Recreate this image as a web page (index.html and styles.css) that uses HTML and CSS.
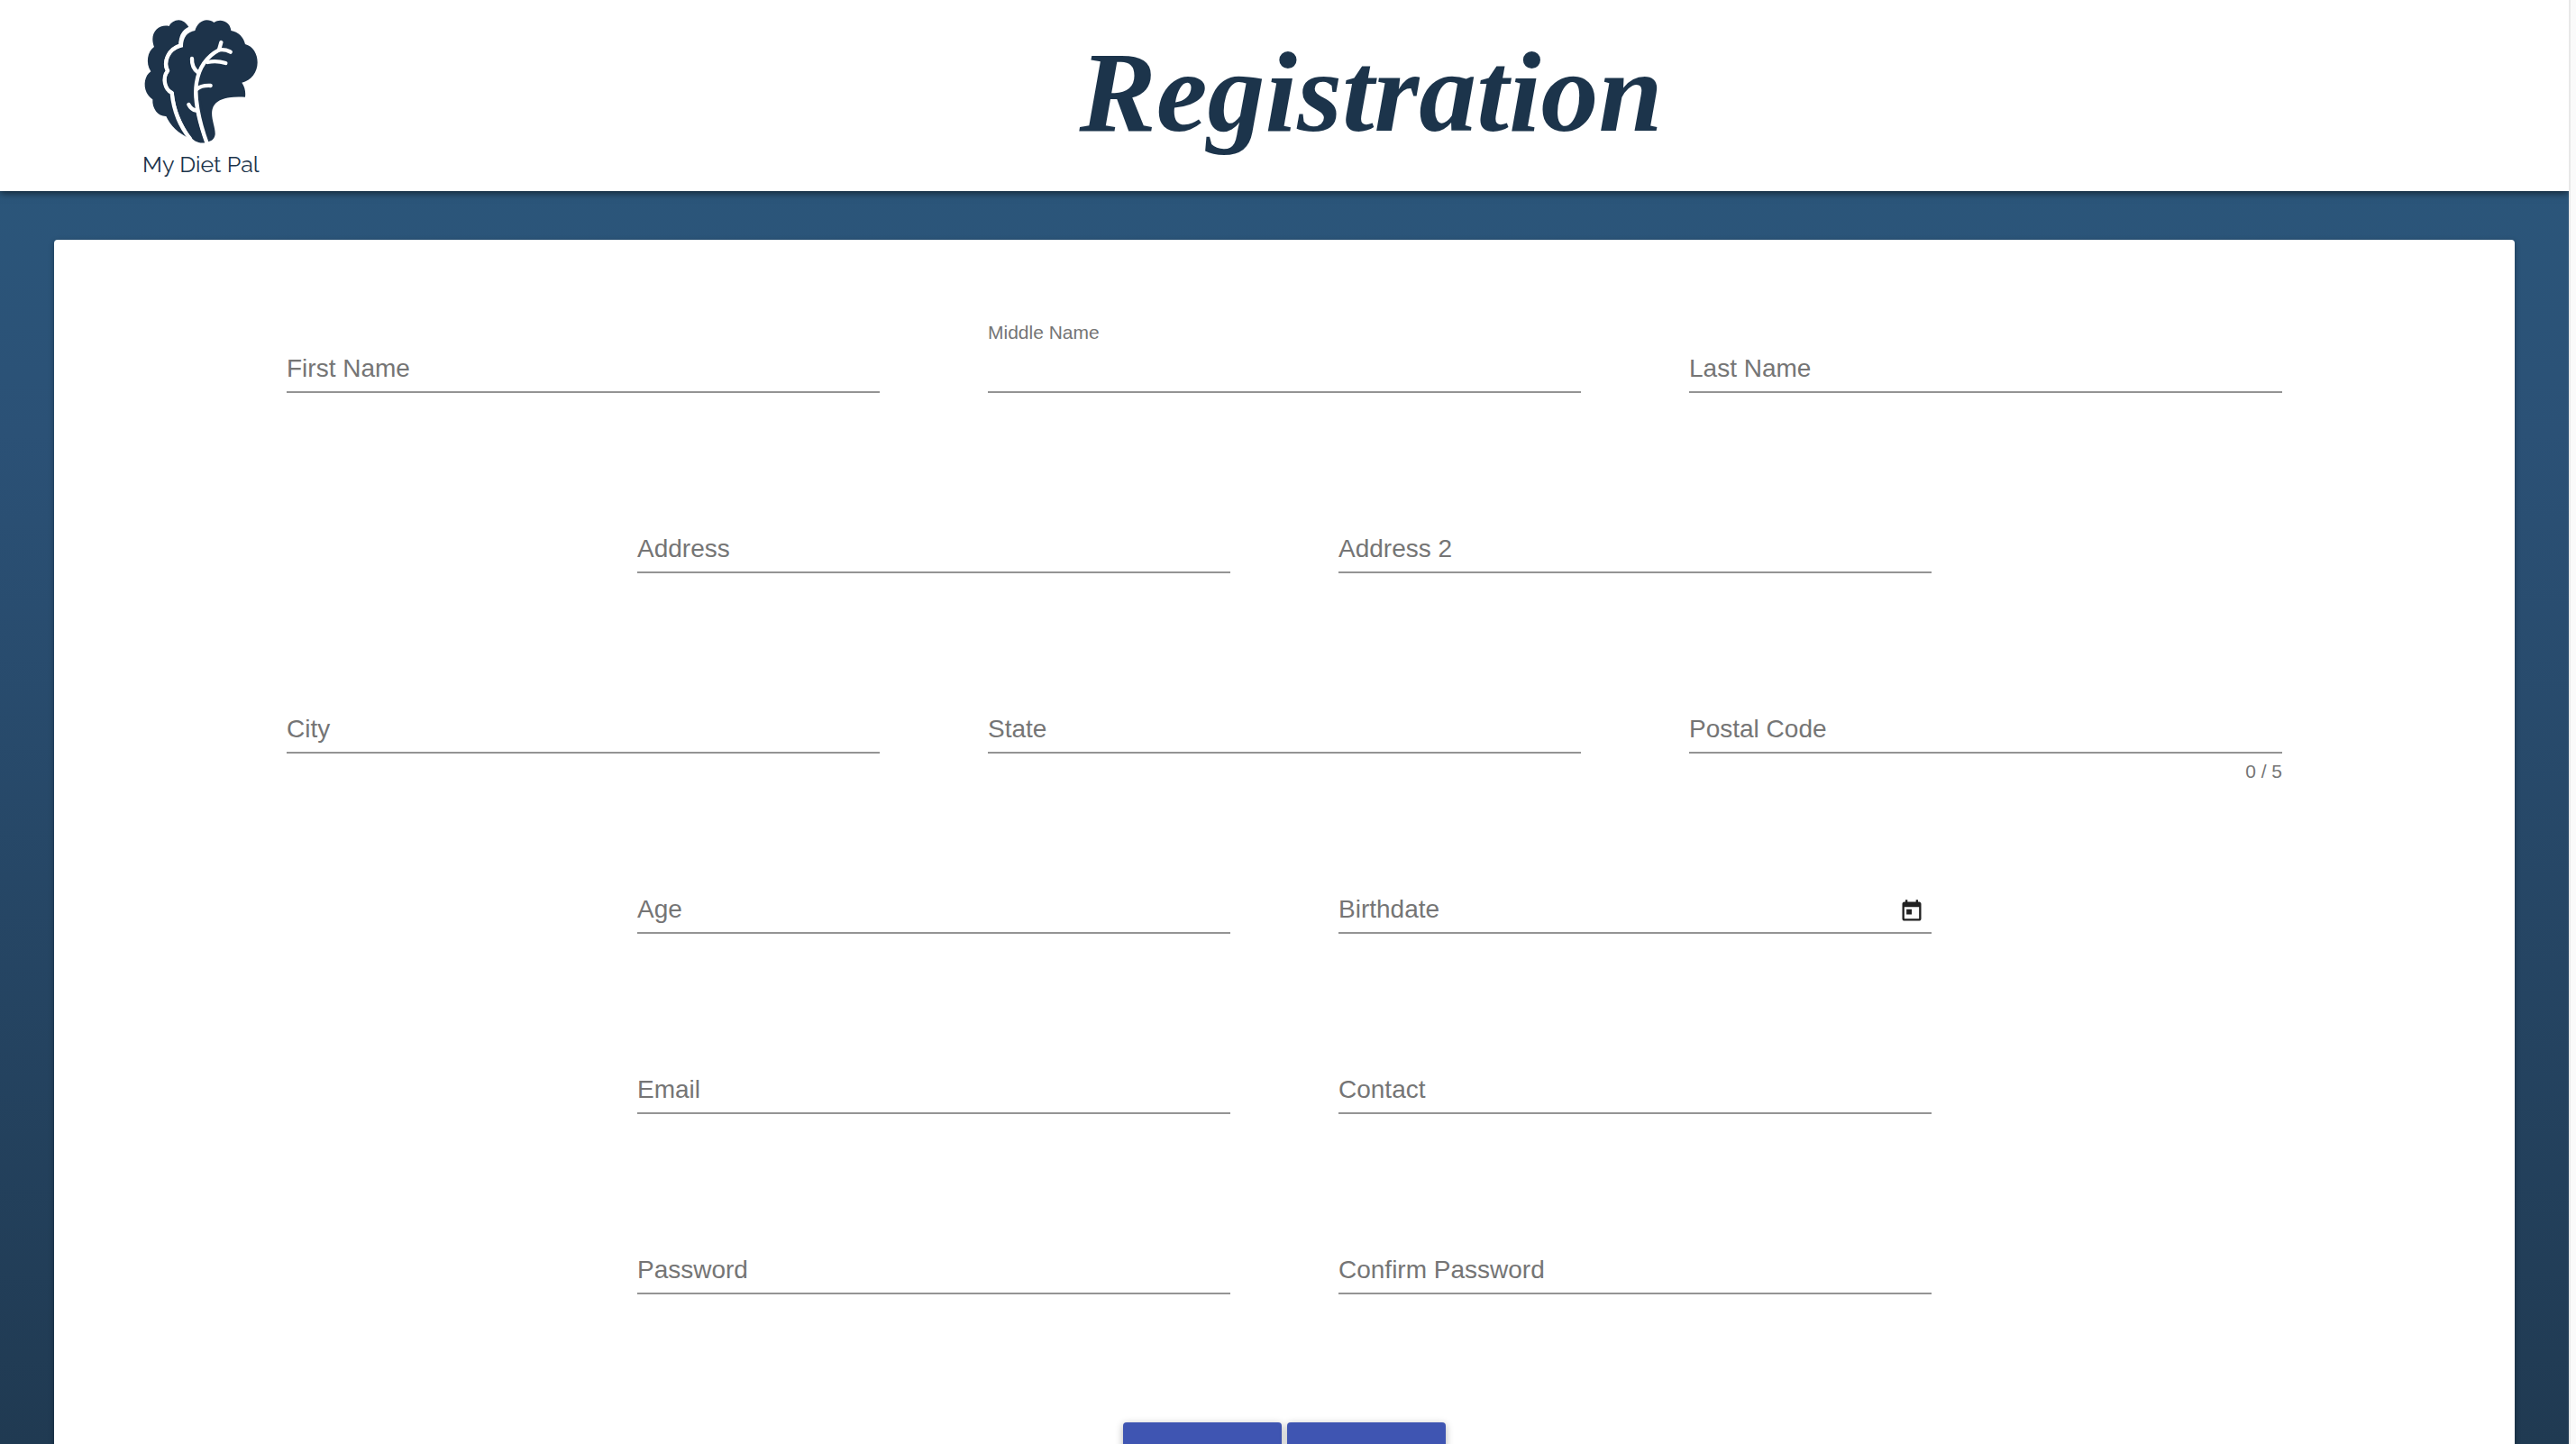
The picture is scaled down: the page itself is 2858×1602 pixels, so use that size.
FILE: index.html
```html
<!DOCTYPE html>
<html lang="en">
<head>
  <meta charset="utf-8">
  <title>My Diet Pal</title>
  <link rel="stylesheet" href="styles.css">
</head>
<body>
  <div class="page">
    <header class="header">
      <a class="brand" href="#">
        <svg class="brand-mark" viewBox="90 60 390 420" aria-hidden="true">
          <g class="leaf">
            <path d="M243 93C232 75 220 67 208 67C194 67 181 76 176 87C149 80 121 99 121 130C121 140 123 148 126 156C104 171 97 209 115 238C95 251 89 284 101 308C106 318 113 325 121 331C119 362 139 388 166 387C180 418 208 445 243 460C214 424 187 371 181 311C158 298 147 260 165 236C151 212 163 163 209 148C209 121 224 103 243 93Z"/>
            <path d="M222 157C221 127 235 106 262 102C268 82 283 67 301 67C311 67 319 70 325 75C350 59 380 75 382 102C406 106 424 124 429 147C456 154 470 180 470 208C470 240 449 269 418 275C428 289 431 305 429 323C375 320 337 327 323 355C309 386 331 421 329 448C327 461 318 470 309 470C293 422 278 370 272 300L259 300C262 367 277 423 296 475C272 478 256 468 245 452C217 408 195 362 191 307C165 297 157 262 178 235C161 208 177 165 222 157Z"/>
            <path d="M259 300L275 300L310 470L296 475Z"/>
          </g>
          <g class="vein">
            <path d="M303 480C272 395 260 320 267 276C274 230 299 189 342 166L349 141"/>
            <path d="M342 166C356 164 368 166 380 173"/>
            <path d="M304 207C325 202 345 204 364 210"/>
            <path d="M274 243C257 231 251 213 252 195"/>
            <path d="M268 297C280 286 296 284 314 285"/>
            <path d="M266 368C255 366 246 358 241 348"/>
            <path d="M244 95C227 103 214 122 214 151C172 163 156 207 171 236C152 260 162 298 185 309C191 368 213 422 246 462"/>
          </g>
        </svg>
        <span class="brand-name">My Diet Pal</span>
      </a>
      <h1 class="title">Registration</h1>
    </header>
    <main class="main">
      <form class="card">
        <div class="row">
          <div class="field"><input id="first" type="text"><label for="first">First Name</label></div>
          <div class="field floating"><input id="middle" type="text"><label for="middle">Middle Name</label></div>
          <div class="field"><input id="last" type="text"><label for="last">Last Name</label></div>
        </div>
        <div class="row">
          <div class="field"><input id="address" type="text"><label for="address">Address</label></div>
          <div class="field"><input id="address2" type="text"><label for="address2">Address 2</label></div>
        </div>
        <div class="row">
          <div class="field"><input id="city" type="text"><label for="city">City</label></div>
          <div class="field"><input id="state" type="text"><label for="state">State</label></div>
          <div class="field"><input id="postal" type="text" maxlength="5"><label for="postal">Postal Code</label><span class="hint">0 / 5</span></div>
        </div>
        <div class="row">
          <div class="field"><input id="age" type="text"><label for="age">Age</label></div>
          <div class="field">
            <input id="birthdate" type="text"><label for="birthdate">Birthdate</label>
            <button class="calendar" type="button" aria-label="Open calendar">
              <svg viewBox="0 0 24 24" aria-hidden="true"><path d="M19 3h-1V1h-2v2H8V1H6v2H5c-1.110 0-1.990.9-1.990 2L3 19c0 1.100.89 2 2 2h14c1.100 0 2-.9 2-2V5c0-1.100-.9-2-2-2zm0 16H5V8h14v11zM7 10h5v5H7z"/></svg>
            </button>
          </div>
        </div>
        <div class="row">
          <div class="field"><input id="email" type="email"><label for="email">Email</label></div>
          <div class="field"><input id="contact" type="tel"><label for="contact">Contact</label></div>
        </div>
        <div class="row">
          <div class="field"><input id="password" type="password"><label for="password">Password</label></div>
          <div class="field"><input id="confirm" type="password"><label for="confirm">Confirm Password</label></div>
        </div>
        <div class="actions">
          <button class="action" type="submit" aria-label="Register"></button>
          <button class="action" type="reset" aria-label="Reset"></button>
        </div>
      </form>
    </main>
  </div>
  <div class="scroll-track"></div>
</body>
</html>
```
FILE: styles.css
```css
* {
  box-sizing: border-box;
}

body {
  display: flex;
  height: 100vh;
  margin: 0;
  overflow: hidden;
  font-family: "Liberation Sans", Arial, sans-serif;
  color: #1c344b;
}

.page {
  display: flex;
  flex: 1;
  flex-direction: column;
  overflow: hidden;
  background: linear-gradient(#2b597d, #2b5176 30%, #203a52);
}

.scroll-track {
  width: 8px;
  border-left: 2px solid #e8e8e8;
  background: #fafafa;
}

.header {
  position: relative;
  display: flex;
  flex: none;
  align-items: flex-start;
  height: 212px;
  padding: 20px 98px 0 158px;
  background: #fff;
  box-shadow: 0 2px 8px rgba(0, 0, 0, .6);
}

.brand {
  display: flex;
  flex: none;
  flex-direction: column;
  width: 132px;
  color: inherit;
  text-decoration: none;
}

.brand-mark {
  width: 132px;
  height: 140px;
}

.leaf {
  fill: #1d334a;
}

.vein {
  fill: none;
  stroke: #fff;
  stroke-width: 13px;
  stroke-linecap: round;
  stroke-linejoin: round;
}

.brand-name {
  font: 25px/44px Raleway, Lato, sans-serif;
  white-space: nowrap;
}

.title {
  flex: 1;
  margin: 0;
  font: italic bold 128px/164px "Apple Chancery", "Liberation Serif", serif;
  text-align: center;
}

.main {
  flex: none;
  padding: 54px 60px;
}

.card {
  padding: 76px 60px 60px;
  border-radius: 4px;
  background: #fff;
  box-shadow: 0 2px 6px rgba(0, 0, 0, .3);
}

.row {
  display: flex;
  justify-content: center;
  gap: 120px;
  height: 200px;
}

.field {
  display: grid;
  flex: 0 1 658px;
  grid-template-columns: 1fr auto;
  grid-template-rows: 94px auto;
  align-content: start;
}

.field input {
  grid-area: 1 / 1 / 2 / 3;
  width: 100%;
  padding: 48px 0 0;
  border: 0;
  border-bottom: 2px solid #949494;
  outline: 0;
  background: transparent;
  font: 28px/40px "Liberation Sans", Arial, sans-serif;
}

.field label {
  grid-area: 1 / 1;
  align-self: end;
  padding-bottom: 9px;
  color: #757575;
  font-size: 28px;
  line-height: 36px;
  pointer-events: none;
}

.floating label {
  align-self: start;
  padding: 13px 0 0;
  font-size: 21px;
  line-height: 28px;
}

.hint {
  grid-area: 2 / 1 / 3 / 3;
  justify-self: end;
  padding-top: 6px;
  color: #757575;
  font-size: 21px;
  line-height: 28px;
}

.calendar {
  grid-area: 1 / 2;
  align-self: end;
  width: 28px;
  height: 28px;
  margin: 0 8px 11px 0;
  padding: 0;
  border: 0;
  background: none;
}

.calendar svg {
  display: block;
  width: 28px;
  height: 28px;
  fill: #212121;
}

.actions {
  display: flex;
  justify-content: center;
  gap: 6px;
  padding-top: 36px;
}

.action {
  width: 176px;
  height: 72px;
  border: 0;
  border-radius: 4px;
  background: #3f55b2;
  box-shadow: 0 2px 8px rgba(0, 0, 0, .3);
}
```
